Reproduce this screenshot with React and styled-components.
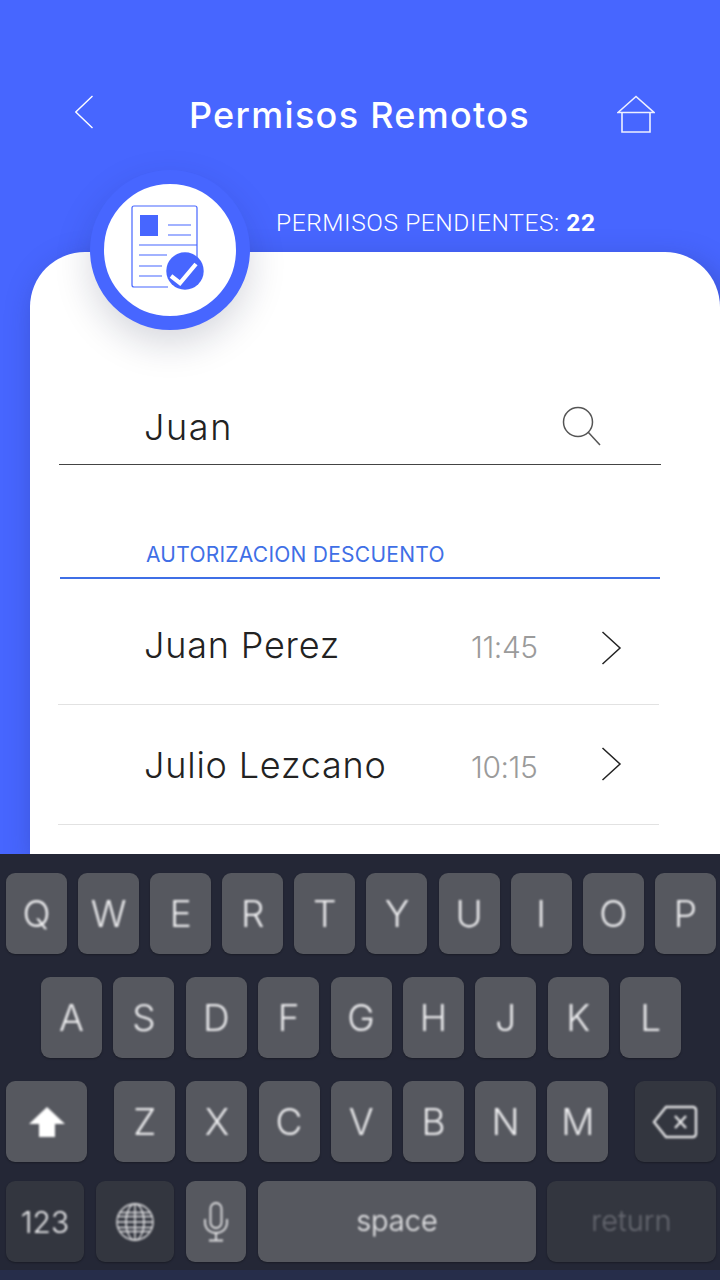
import styled, { createGlobalStyle } from 'styled-components';

const Global = createGlobalStyle`
  html, body { margin: 0; padding: 0; }
  body { font-family: "Inter", "Liberation Sans", sans-serif; }
`;

const Page = styled.div`
  width: 720px;
  height: 1280px;
  display: flex;
  flex-direction: column;
  overflow: hidden;
  background: #4766ff;
`;

const Top = styled.div`
  height: 854px;
  display: flex;
  flex-direction: column;
  position: relative;
  overflow: hidden;
`;

const Header = styled.header`
  height: 40px;
  margin-top: 95px;
  padding: 0 65px 0 75px;
  display: flex;
  align-items: center;
  justify-content: space-between;
`;

const BackIcon = styled.svg`
  margin-top: -6px;
`;

const Title = styled.h1`
  margin: 0 0 0 8px;
  font-size: 36px;
  font-weight: 500;
  letter-spacing: 1.3px;
  color: #fff;
`;

const Pending = styled.p`
  margin: 71px 0 0 276px;
  height: 34px;
  line-height: 34px;
  font-family: "Roboto", sans-serif;
  font-size: 24.5px;
  font-weight: 300;
  letter-spacing: 0.58px;
  color: #fff;
  white-space: nowrap;
  b { font-weight: 700; }
`;

const Card = styled.main`
  flex: 1;
  margin: 12px 0 0 30px;
  padding: 0 61px 0 28px;
  background: #fff;
  border-radius: 55px 55px 0 0;
  box-shadow: 6px 10px 30px rgba(28, 36, 90, 0.34);
`;

const Medallion = styled.div`
  position: absolute;
  left: 90px;
  top: 170px;
  width: 132px;
  height: 132px;
  border: 14px solid #4766ff;
  border-radius: 50%;
  background: #fff;
  box-shadow: 0 14px 36px rgba(20, 24, 60, 0.17);
`;

const Search = styled.div`
  height: 213px;
  box-sizing: border-box;
  padding: 151px 59px 0 85px;
  margin: 0 -2px 0 1px;
  display: flex;
  justify-content: space-between;
  border-bottom: 1px solid #444;
`;

const Query = styled.span`
  font-size: 36px;
  font-weight: 300;
  line-height: 48px;
  letter-spacing: 1.6px;
  color: #222;
`;

const SearchIcon = styled.svg`
  width: 40px;
  height: 40px;
  margin-top: 3px;
`;

const Section = styled.h2`
  margin: 0 -1px 0 2px;
  padding: 75px 0 7px 86px;
  font-size: 21px;
  font-weight: 400;
  line-height: 30px;
  letter-spacing: 0.25px;
  color: #3f6fe6;
  border-bottom: 2px solid #3f6fe6;
`;

const Row = styled.div`
  height: ${(p) => p.$height}px;
  box-sizing: border-box;
  padding: ${(p) => p.$top}px 37px 0 86px;
  display: flex;
  align-items: flex-start;
  border-bottom: 1px solid #e2e2e2;
`;

const Name = styled.span`
  flex: 1;
  font-size: 36px;
  font-weight: 300;
  line-height: 48px;
  letter-spacing: 0.8px;
  color: #222;
`;

const Time = styled.span`
  width: 129px;
  margin-top: 2px;
  font-size: 30px;
  font-weight: 300;
  line-height: 48px;
  letter-spacing: -0.4px;
  color: #9b9b9b;
`;

const Chevron = styled.svg`
  width: 22px;
  height: 34px;
  margin-top: ${(p) => p.$top}px;
`;

const Keyboard = styled.section`
  flex: 1;
  background: #242736;
  padding-top: 19px;
  display: flex;
  flex-direction: column;
  border-bottom: 10px solid #262d4a;
  box-sizing: border-box;
`;

const KeyRow = styled.div`
  display: flex;
  gap: ${(p) => p.$gap}px;
  height: 81px;
  margin-bottom: ${(p) => p.$after || 0}px;
  padding-left: ${(p) => p.$left || 6}px;
`;

const Key = styled.div`
  width: ${(p) => p.$w || 61}px;
  margin-left: ${(p) => p.$ml || 0}px;
  display: flex;
  align-items: center;
  justify-content: center;
  border-radius: 9px;
  background: ${(p) => (p.$dark ? '#33363f' : '#56585f')};
  color: ${(p) => (p.$dim ? '#686a72' : '#eeeef0')};
  font-family: "Inter", sans-serif;
  font-weight: 350;
  font-size: ${(p) => p.$size || 37}px;
  box-shadow: 0 1px 2px rgba(0, 0, 0, 0.3);
  span, svg { filter: blur(0.8px); }
`;

const WordLabel = styled.span`
  margin-top: -3px;
`;

const letters = (s) => s.split('').map((c) => <Key key={c}><span>{c}</span></Key>);

export default function App() {
  return (
    <Page>
      <Global />
      <Top>
        <Header>
          <BackIcon width="19" height="34" viewBox="0 0 19 34" fill="none" stroke="#fff" strokeWidth="1.4">
            <path d="M17.5 1L0.8 17L17.5 33" />
          </BackIcon>
          <Title>Permisos Remotos</Title>
          <svg width="38" height="40" viewBox="0 0 38 40" fill="none" stroke="#eef0ff" strokeWidth="1.6">
            <path d="M1 17.5L19 1.5L37 17.5H1Z" />
            <path d="M5 17.5V37H33V17.5" />
          </svg>
        </Header>
        <Pending>PERMISOS PENDIENTES: <b>22</b></Pending>
        <Card>
          <Search>
            <Query>Juan</Query>
            <SearchIcon viewBox="0 0 40 40" fill="none" stroke="#555" strokeWidth="1.5">
              <circle cx="16" cy="16" r="14.5" />
              <path d="M26 26L38 39" />
            </SearchIcon>
          </Search>
          <Section>AUTORIZACION DESCUENTO</Section>
          <Row $height={126} $top={42}>
            <Name>Juan Perez</Name>
            <Time>11:45</Time>
            <Chevron $top={10} viewBox="0 0 22 34" fill="none" stroke="#222" strokeWidth="1.5">
              <path d="M2.5 1L20 17L2.5 33" />
            </Chevron>
          </Row>
          <Row $height={120} $top={36}>
            <Name>Julio Lezcano</Name>
            <Time>10:15</Time>
            <Chevron $top={6} viewBox="0 0 22 34" fill="none" stroke="#222" strokeWidth="1.5">
              <path d="M2.5 1L20 17L2.5 33" />
            </Chevron>
          </Row>
        </Card>
        <Medallion>
          <svg width="132" height="132" viewBox="104 184 132 132" fill="none" stroke="#4766ff" strokeWidth="1.2">
            <path d="M168 287H134a2 2 0 0 1-2-2V208a2 2 0 0 1 2-2h61a2 2 0 0 1 2 2v50" />
            <rect x="140" y="215" width="18" height="21" fill="#4766ff" stroke="none" />
            <path d="M168 225H191M168 235H191M139 245H197M139 255H167M139 266H162M139 276H162" />
            <circle cx="185" cy="271" r="18.7" fill="#4766ff" stroke="none" />
            <path d="M171 276L180 283L196 264" stroke="#fff" strokeWidth="4.2" />
          </svg>
        </Medallion>
      </Top>
      <Keyboard>
        <KeyRow $gap={11.1} $after={23}>{letters('QWERTYUIOP')}</KeyRow>
        <KeyRow $gap={11.4} $after={23} $left={41}>{letters('ASDFGHJKL')}</KeyRow>
        <KeyRow $gap={11.2} $after={19}>
          <Key $w={81}>
            <svg width="38" height="32" viewBox="0 0 38 32" fill="#fff">
              <path d="M19 1L37 18H27V31H11V18H1Z" />
            </svg>
          </Key>
          <Key $ml={16}><span>Z</span></Key>
          {letters('XCVBNM')}
          <Key $w={81} $ml={15} $dark>
            <svg width="46" height="34" viewBox="0 0 46 34" fill="none" stroke="#e4e4e6" strokeWidth="2.4">
              <path d="M14 2H41a3 3 0 0 1 3 3V29a3 3 0 0 1-3 3H14L2 17Z" />
              <path d="M23 11L34 23M34 11L23 23" />
            </svg>
          </Key>
        </KeyRow>
        <KeyRow $gap={12}>
          <Key $w={78} $dark $size={30}><span>123</span></Key>
          <Key $w={78} $dark>
            <svg width="40" height="40" viewBox="0 0 40 40" fill="none" stroke="#e4e4e6" strokeWidth="1.4">
              <circle cx="20" cy="20" r="18" />
              <ellipse cx="20" cy="20" rx="9" ry="18" />
              <path d="M20 2V38M2 20H38M5 10.5H35M3 14.5H37M3 25.5H37M5 29.5H35" />
            </svg>
          </Key>
          <Key $w={60}>
            <svg width="26" height="40" viewBox="0 0 26 40" fill="none" stroke="#e4e4e6" strokeWidth="1.8">
              <rect x="7.5" y="1" width="11" height="25" rx="5.5" />
              <path d="M2 17V20C2 27 7 31 13 31C19 31 24 27 24 20V17M13 31V38M6 38.5H20" />
            </svg>
          </Key>
          <Key $w={278} $size={29}><WordLabel>space</WordLabel></Key>
          <Key $w={169} $ml={-1} $dark $dim $size={29}><WordLabel>return</WordLabel></Key>
        </KeyRow>
      </Keyboard>
    </Page>
  );
}
